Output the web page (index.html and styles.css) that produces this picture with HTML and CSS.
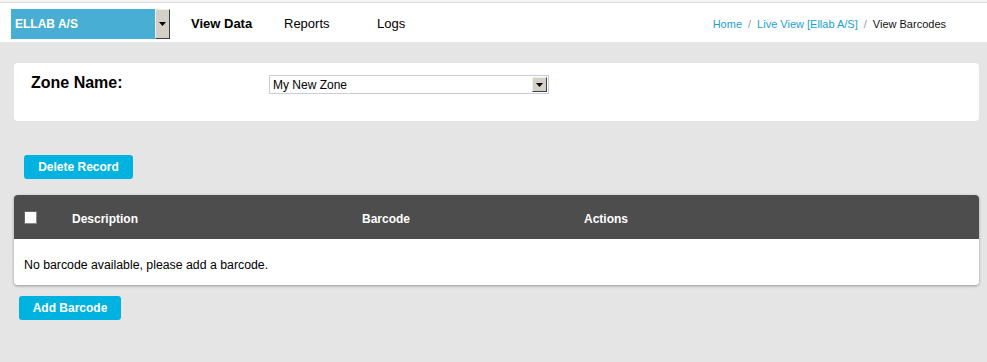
FILE: index.html
```html
<!DOCTYPE html>
<html lang="en">
<head>
    <meta charset="UTF-8">
    <meta name="viewport" content="width=device-width, initial-scale=1.0">
    <title>View Barcodes</title>
    <link rel="stylesheet" href="styles.css">
</head>
<body>
    <div class="top-strip"></div>
    <div class="header">
        <div class="company-select">
            <span class="company-name">ELLAB A/S</span>
            <span class="drop-btn">
                <svg width="7" height="4" viewBox="0 0 7 4"><path d="M0 0h7L3.5 4z" fill="#000"/></svg>
            </span>
        </div>
        <div class="nav">
            <a class="nav-item active">View Data</a>
            <a class="nav-item">Reports</a>
            <a class="nav-item">Logs</a>
        </div>
        <div class="breadcrumb">
            <a>Home</a>
            <span class="sep">/</span>
            <a>Live View [Ellab A/S]</a>
            <span class="sep">/</span>
            <span class="current">View Barcodes</span>
        </div>
    </div>

    <div class="content">
        <div class="zone-panel">
            <div class="zone-label">Zone Name:</div>
            <div class="zone-select">
                <span class="zone-value">My New Zone</span>
                <span class="drop-btn small">
                    <svg width="7" height="4" viewBox="0 0 7 4"><path d="M0 0h7L3.5 4z" fill="#000"/></svg>
                </span>
            </div>
        </div>

        <button class="btn btn-delete">Delete Record</button>

        <div class="table">
            <div class="table-head">
                <span class="check"></span>
                <span class="head-label">Description</span>
                <span class="head-label">Barcode</span>
                <span class="head-label">Actions</span>
            </div>
            <div class="table-body">No barcode available, please add a barcode.</div>
        </div>

        <button class="btn btn-add">Add Barcode</button>
    </div>
</body>
</html>
```

FILE: styles.css
```css
body {
    margin: 0;
    background: #e5e5e5;
    font-family: "Liberation Sans", Arial, sans-serif;
    color: #000;
}

.top-strip {
    height: 2px;
    background: #f5f5f5;
}

.header {
    height: 39px;
    background: #fff;
    border-top: 1px solid #dcdcdc;
    display: flex;
    align-items: center;
    padding-left: 11px;
    padding-right: 41px;
}

.company-select {
    display: flex;
    height: 30px;
    margin-top: 3px;
}

.company-name {
    width: 140px;
    background: #49aed4;
    color: #fff;
    font-size: 12px;
    font-weight: bold;
    padding-left: 4px;
    display: flex;
    align-items: center;
}

.drop-btn {
    width: 13px;
    background: #d4d0c8;
    border-top: 1px solid #f0eee8;
    border-left: 1px solid #f0eee8;
    border-right: 1px solid #404040;
    border-bottom: 1px solid #404040;
    display: flex;
    align-items: center;
    justify-content: center;
}

.nav {
    display: flex;
    margin-left: 21px;
    margin-top: 2px;
}

.nav-item {
    width: 93px;
    font-size: 13px;
    color: #000;
}

.nav-item.active {
    font-weight: bold;
}

.breadcrumb {
    margin-left: auto;
    margin-top: 2px;
    font-size: 11px;
    color: #1a9fd8;
    display: flex;
    gap: 6px;
}

.breadcrumb .sep {
    color: #999;
}

.breadcrumb .current {
    color: #111;
}

.content {
    padding: 21px 8px 40px 14px;
}

.zone-panel {
    background: #fff;
    border-radius: 4px;
    height: 38px;
    padding: 10px 17px;
    display: flex;
    align-items: flex-start;
}

.zone-label {
    width: 238px;
    font-size: 16px;
    font-weight: bold;
    line-height: 20px;
}

.zone-select {
    width: 278px;
    height: 17px;
    margin-top: 2px;
    border: 1px solid #c9cbe0;
    background: #fff;
    display: flex;
    align-items: center;
    justify-content: space-between;
}

.zone-value {
    font-size: 12px;
    padding-left: 3px;
}

.drop-btn.small {
    height: 13px;
    margin-right: 1px;
}

.btn {
    display: block;
    border: none;
    border-radius: 3px;
    background: #00b2df;
    color: #fff;
    font-family: "Liberation Sans", Arial, sans-serif;
    font-size: 12px;
    font-weight: bold;
    height: 24px;
    padding: 0;
}

.btn-delete {
    width: 109px;
    margin: 34px 0 16px 10px;
}

.table {
    border-radius: 4px;
    box-shadow: 0 1px 3px rgba(0, 0, 0, 0.35);
    overflow: hidden;
}

.table-head {
    background: #4d4d4d;
    height: 44px;
    display: grid;
    grid-template-columns: 48px 290px 222px 1fr;
    align-items: center;
    padding-left: 10px;
    color: #fff;
    font-size: 12px;
    font-weight: bold;
}

.head-label {
    padding-top: 4px;
}

.check {
    width: 11px;
    height: 11px;
    background: #fff;
    border: 1px solid #8a8a8a;
    border-top-color: #666;
    border-left-color: #666;
}

.table-body {
    background: #fff;
    height: 40px;
    padding-top: 6px;
    display: flex;
    align-items: center;
    padding-left: 10px;
    font-size: 12.3px;
}

.btn-add {
    width: 102px;
    margin: 11px 0 0 5px;
}
```
